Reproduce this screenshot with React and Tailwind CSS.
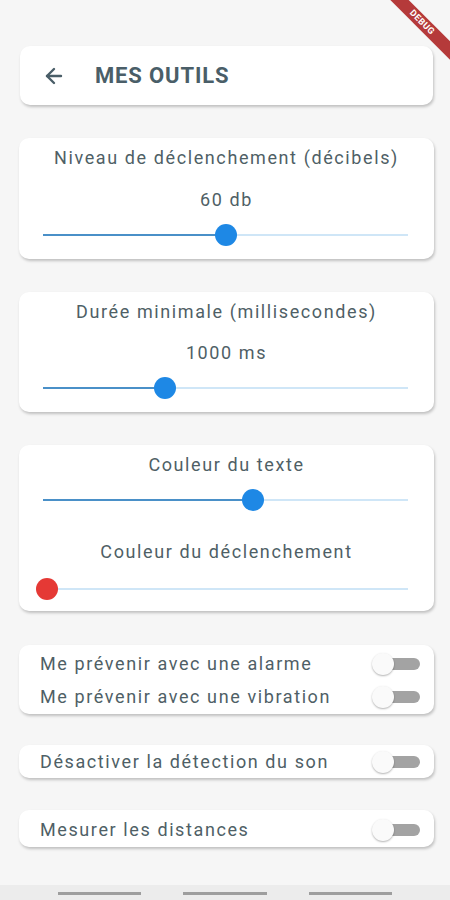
import { ArrowLeft } from 'lucide-react'

function Card({ className = '', children }) {
  return (
    <div className={`bg-white rounded-[10px] shadow-[1px_2px_3px_rgba(0,0,0,0.22)] ${className}`}>
      {children}
    </div>
  )
}

function Slider({ value, thumb = 'bg-[#1e88e5]', active = true }) {
  const pct = `${value * 100}%`
  return (
    <div className="relative h-[22px] ml-[24px] mr-[26px]">
      <div className="absolute left-0 right-0 top-[10px] h-[2px] bg-[#cfe6f7]" />
      {active && <div className="absolute left-0 top-[10px] h-[2px] bg-[#4a90c8]" style={{ width: pct }} />}
      <div
        className={`absolute top-0 w-[22px] h-[22px] -ml-[11px] rounded-full ${thumb}`}
        style={{ left: pct }}
      />
    </div>
  )
}

function Toggle() {
  return (
    <div className="relative w-[48px] h-[22px] shrink-0">
      <div className="absolute left-[7px] right-0 top-[5px] h-[12px] rounded-full bg-[#a3a3a3]" />
      <div className="absolute left-0 top-0 w-[22px] h-[22px] rounded-full bg-[#fafafa] shadow-[0_1px_2px_rgba(0,0,0,0.3)]" />
    </div>
  )
}

function Label({ className = '', children }) {
  return (
    <div className={`text-[18px] tracking-[1.6px] text-[#4f5f66] leading-[24px] ${className}`}>{children}</div>
  )
}

function Row({ label }) {
  return (
    <div className="flex items-center justify-between pl-[21px] pr-[14px]">
      <Label>{label}</Label>
      <Toggle />
    </div>
  )
}

export default function App() {
  return (
    <div className="relative w-[450px] h-[900px] bg-[#f6f6f6] overflow-hidden" style={{ fontFamily: 'Roboto, "Noto Sans", sans-serif' }}>
      <div className="pt-[46px] pl-[19px] pr-[16px] flex flex-col">
        <Card className="h-[59px] flex items-center pl-[22px] mx-[1px]">
          <ArrowLeft className="w-[24px] h-[24px] text-[#4a5e68]" strokeWidth={2.4} />
          <span className="ml-[29px] text-[22px] font-bold text-[#4a5e68] tracking-[0.85px]">MES OUTILS</span>
        </Card>

        <Card className="mt-[33px] h-[121px] pt-[8px]">
          <Label className="text-center">Niveau de déclenchement (décibels)</Label>
          <Label className="text-center mt-[18px]">60 db</Label>
          <div className="mt-[12px]">
            <Slider value={0.5} />
          </div>
        </Card>

        <Card className="mt-[33px] h-[120px] pt-[8px]">
          <Label className="text-center">Durée minimale (millisecondes)</Label>
          <Label className="text-center mt-[17px]">1000 ms</Label>
          <div className="mt-[12px]">
            <Slider value={0.334} />
          </div>
        </Card>

        <Card className="mt-[33px] h-[166px] pt-[8px]">
          <Label className="text-center">Couleur du texte</Label>
          <div className="mt-[12px]">
            <Slider value={0.575} />
          </div>
          <Label className="text-center mt-[29px]">Couleur du déclenchement</Label>
          <div className="mt-[14px]">
            <Slider value={0.011} thumb="bg-[#e53935]" active={false} />
          </div>
        </Card>

        <Card className="mt-[34px] h-[69px] flex flex-col justify-center gap-[9px] pt-[2px]">
          <Row label="Me prévenir avec une alarme" />
          <Row label="Me prévenir avec une vibration" />
        </Card>

        <Card className="mt-[31px] h-[33px] flex flex-col justify-center">
          <Row label="Désactiver la détection du son" />
        </Card>

        <Card className="mt-[32px] h-[37px] flex flex-col justify-center pt-[2px]">
          <Row label="Mesurer les distances" />
        </Card>
      </div>

      <div className="absolute left-0 right-0 bottom-0 h-[15px] bg-[#ececec] flex items-start justify-center gap-[42px] pt-[7px]">
        <div className="w-[83px] h-[3px] bg-[#9e9e9e]" />
        <div className="w-[84px] h-[3px] bg-[#9e9e9e]" />
        <div className="w-[83px] h-[3px] bg-[#9e9e9e]" />
      </div>

      <div className="absolute top-[16px] right-[-27px] w-[110px] h-[13px] bg-[#b53a3a] rotate-45 flex items-center justify-center">
        <span className="text-[9px] font-bold text-white leading-none tracking-[0.5px]">DEBUG</span>
      </div>
    </div>
  )
}
